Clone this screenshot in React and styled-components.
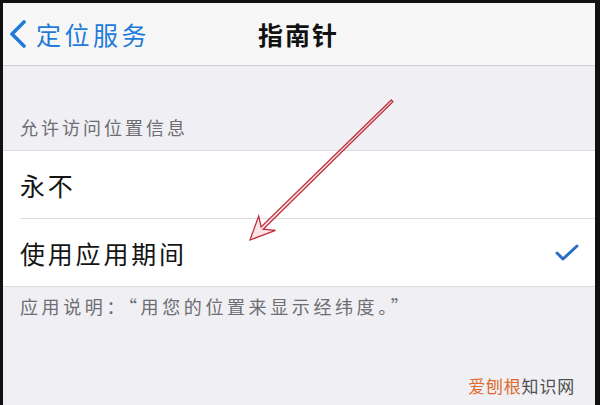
import React from "react";
import styled, { createGlobalStyle } from "styled-components";

const Global = createGlobalStyle`
  html, body { margin: 0; padding: 0; background: #000; }
  body { font-family: "Noto Sans CJK SC", "Noto Sans", sans-serif; }
`;

const Frame = styled.div`
  position: relative;
  width: 600px;
  height: 405px;
  box-sizing: border-box;
  border-style: solid;
  border-color: #111;
  border-width: 3px 5px 0 3px;
  background: #efeff4;
  display: flex;
  flex-direction: column;
  overflow: hidden;
`;

const NavBar = styled.div`
  height: 62px;
  flex: none;
  background: #f7f7f8;
  border-bottom: 1px solid #cfd0d4;
  display: grid;
  grid-template-columns: 1fr auto 1fr;
  align-items: center;
  padding: 0 0 0 5px;
`;

const Back = styled.div`
  display: flex;
  align-items: center;
  gap: 8px;
  color: #1f7ad8;
  font-size: 25px;
  letter-spacing: 3.5px;
`;

const Title = styled.div`
  font-size: 25px;
  font-weight: 700;
  color: #111;
  letter-spacing: 2px;
  margin-left: -6px;
`;

const SectionHeader = styled.div`
  height: 84px;
  box-sizing: border-box;
  padding: 49px 20px 0 17px;
  color: #6d6d72;
  font-size: 18px;
  letter-spacing: 3px;
  line-height: 24px;
`;

const Group = styled.div`
  background: #fff;
  border-top: 1px solid #dcdce0;
  border-bottom: 1px solid #dcdce0;
`;

const Row = styled.div`
  height: 67px;
  display: flex;
  align-items: center;
  justify-content: space-between;
  margin-left: 17px;
  padding-right: 16px;
  font-size: 25px;
  letter-spacing: 2.8px;
  color: #151515;
  border-top: ${(p) => (p.$first ? "none" : "1px solid #dcdce0")};
`;

const Footer = styled.div`
  padding: 6px 20px 0 17px;
  color: #6d6d72;
  font-size: 18px;
  letter-spacing: 3.6px;
  line-height: 26px;
`;

const Spacer = styled.div`
  flex: 1;
  display: flex;
  align-items: flex-end;
  justify-content: flex-end;
  padding: 0 20px 7px 0;
`;

const Watermark = styled.div`
  font-size: 17px;
  letter-spacing: 0.8px;
  color: #505050;
`;

const Orange = styled.span`
  color: #de6a2a;
`;

const Overlay = styled.svg`
  position: absolute;
  left: -3px;
  top: -3px;
  width: 600px;
  height: 405px;
  pointer-events: none;
`;

export default function App() {
  return (
    <>
      <Global />
      <Frame>
        <NavBar>
          <Back>
            <svg width="20" height="28" viewBox="0 0 20 28">
              <path d="M16 2 L4 14 L16 26" fill="none" stroke="#1f7ad8" strokeWidth="3.6" strokeLinecap="round" strokeLinejoin="round" />
            </svg>
            <span>定位服务</span>
          </Back>
          <Title>指南针</Title>
          <div />
        </NavBar>
        <SectionHeader>允许访问位置信息</SectionHeader>
        <Group>
          <Row $first>永不</Row>
          <Row>
            <span>使用应用期间</span>
            <svg width="24" height="17" viewBox="0 0 24 17">
              <path d="M2 9 L8 15 L22 2" fill="none" stroke="#2a6fc6" strokeWidth="3" strokeLinecap="round" strokeLinejoin="round" />
            </svg>
          </Row>
        </Group>
        <Footer>应用说明：“用您的位置来显示经纬度。”</Footer>
        <Spacer>
          <Watermark>
            <Orange>爱刨根</Orange>知识网
          </Watermark>
        </Spacer>
        <Overlay viewBox="0 0 600 405">
          <polygon
            points="250,240 258.7,216 261.1,227 391.3,100 392.9,101.8 263.2,229.2 275.5,230.4"
            fill="#f3c9ce"
            fillOpacity="0.5"
            stroke="#c0303e"
            strokeWidth="1.3"
            strokeLinejoin="miter"
          />
        </Overlay>
      </Frame>
    </>
  );
}
